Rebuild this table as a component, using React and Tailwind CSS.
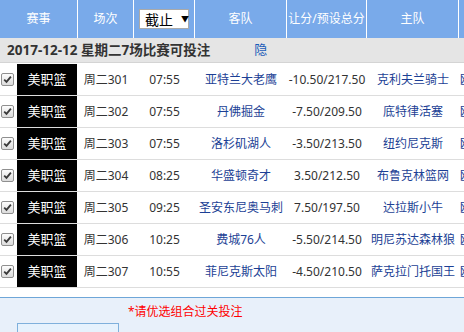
const rows = [
  { no: "301", time: "07:55", away: "亚特兰大老鹰", line: "-10.50/217.50", home: "克利夫兰骑士" },
  { no: "302", time: "07:55", away: "丹佛掘金", line: "-7.50/209.50", home: "底特律活塞" },
  { no: "303", time: "07:55", away: "洛杉矶湖人", line: "-3.50/213.50", home: "纽约尼克斯" },
  { no: "304", time: "08:25", away: "华盛顿奇才", line: "3.50/212.50", home: "布鲁克林篮网" },
  { no: "305", time: "09:25", away: "圣安东尼奥马刺", line: "7.50/197.50", home: "达拉斯小牛" },
  { no: "306", time: "10:25", away: "费城76人", line: "-5.50/214.50", home: "明尼苏达森林狼" },
  { no: "307", time: "10:55", away: "菲尼克斯太阳", line: "-4.50/210.50", home: "萨克拉门托国王" },
];

function Check() {
  return (
    <span className="flex h-[13px] w-[13px] items-center justify-center rounded-[2px] border border-[#8f8f8f] bg-gradient-to-b from-[#fdfdfd] to-[#dcdcdc]">
      <svg width="9" height="9" viewBox="0 0 9 9">
        <path d="M1.2 4.6 L3.5 6.9 L7.9 1.6" fill="none" stroke="#3a3a3a" strokeWidth="1.8" />
      </svg>
    </span>
  );
}

function Row({ r }) {
  return (
    <div className="flex h-[32px] border-b border-[#dddddd] text-[12px] whitespace-nowrap">
      <div className="flex w-[78px] shrink-0 items-center">
        <div className="w-[17px] pl-px"><Check /></div>
        <div className="flex h-full w-[60px] items-center justify-center bg-black text-[13px] text-white">美职篮</div>
      </div>
      <div className="flex w-[56px] shrink-0 items-center justify-center text-[#333]">周二{r.no}</div>
      <div className="flex w-[61px] shrink-0 items-center justify-center text-[#333]">{r.time}</div>
      <div className="flex w-[92px] shrink-0 items-center justify-center text-[#1c3f95]">{r.away}</div>
      <div className="flex w-[80px] shrink-0 items-center justify-center text-[#333]">{r.line}</div>
      <div className="flex w-[92px] shrink-0 items-center justify-center text-[#1c3f95]">{r.home}</div>
      <div className="flex flex-1 items-center overflow-hidden pl-px text-[#1c3f95]">欧</div>
    </div>
  );
}

export default function App() {
  return (
    <div
      className="h-[332px] w-[464px] overflow-hidden bg-white"
      style={{ fontFamily: '"Noto Sans", "Noto Sans CJK SC", sans-serif' }}
    >
      <div className="flex h-[38px] bg-[#79aaea] text-[12px] text-white whitespace-nowrap">
        <div className="flex w-[78px] shrink-0 items-center justify-center border-r border-white">赛事</div>
        <div className="flex w-[56px] shrink-0 items-center justify-center border-r border-white">场次</div>
        <div className="flex w-[61px] shrink-0 items-center border-r border-white pl-[5px]">
          <div className="flex h-[20px] w-[50px] items-center border border-[#a9a9a9] bg-white pl-[5px] text-[14px] text-black">
            截止
            <span className="ml-[8px] text-[8px]">▼</span>
          </div>
        </div>
        <div className="flex w-[92px] shrink-0 items-center justify-center border-r border-white">客队</div>
        <div className="flex w-[80px] shrink-0 items-center justify-center border-r border-white">让分/预设总分</div>
        <div className="flex w-[92px] shrink-0 items-center justify-center border-r border-white">主队</div>
        <div className="flex-1" />
      </div>

      <div className="mb-px flex h-[25px] items-center border-b border-[#d4d4d4] bg-[#e5e5e5] pl-[7px] text-[13.5px] whitespace-nowrap">
        <span className="font-bold text-[#333]">2017-12-12 星期二7场比赛可投注</span>
        <span className="ml-[44px] text-[13px] text-[#1a5bb8]">隐</span>
      </div>

      {rows.map((r) => (
        <Row key={r.no} r={r} />
      ))}

      <div className="mt-[9px] h-[40px] border-t border-[#6ea6d8] bg-[#e8f0fa]">
        <div className="pl-[128px] pt-[6px] text-[12px] leading-[16px] text-[#ff0000]">*请优选组合过关投注</div>
        <div className="ml-[17px] mt-[3px] h-[20px] w-[102px] border border-[#7fb0dc] bg-[#e6f2fd]" />
      </div>
    </div>
  );
}
